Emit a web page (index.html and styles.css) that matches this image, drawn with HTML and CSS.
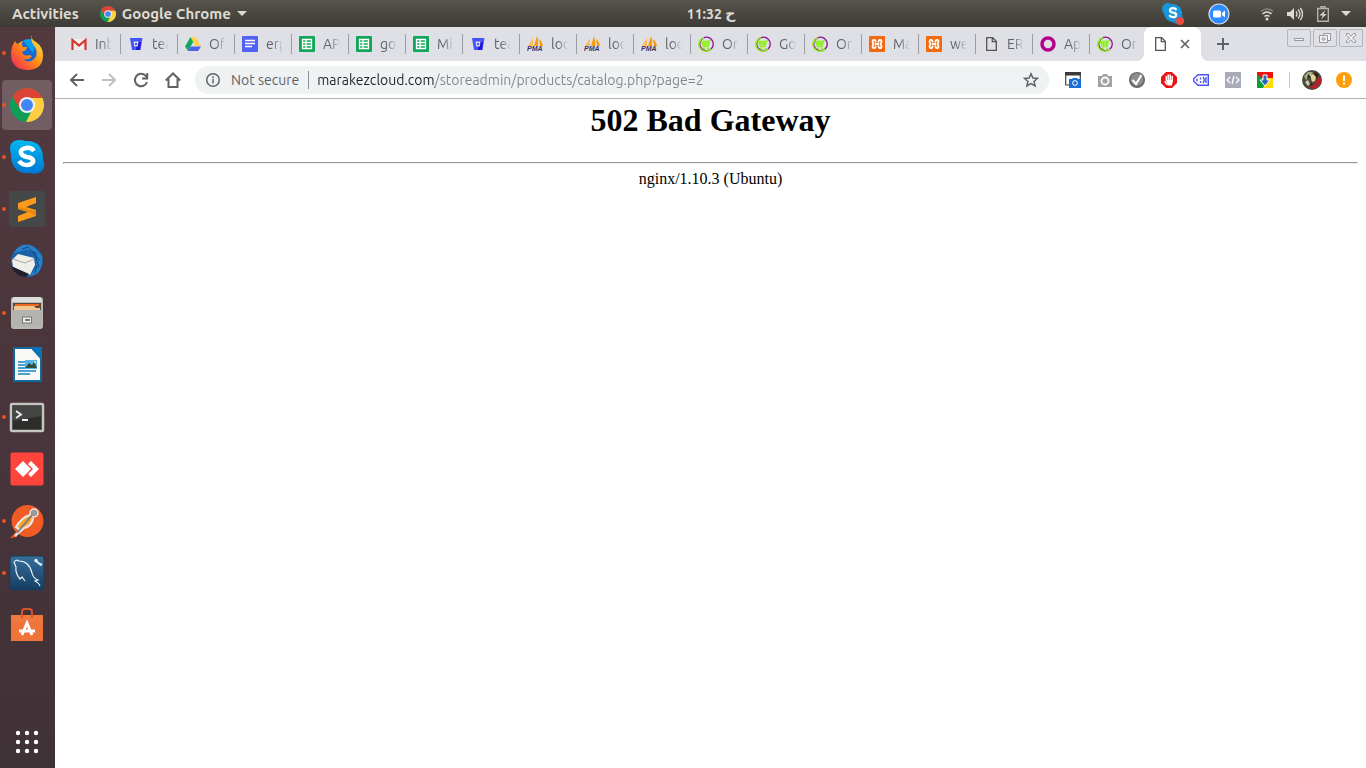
FILE: index.html
```
<!DOCTYPE html>
<html lang="en">
<head>
<meta charset="utf-8">
<title>502 Bad Gateway</title>
<link rel="stylesheet" href="styles.css">
</head>
<body>

<!-- icons used more than once -->
<svg class="sprite" aria-hidden="true">
<symbol id="chrome" viewBox="0 0 34 34">
<circle cx="17" cy="17" r="17" fill="#109d58"/>
<path d="M17 17L2.300 8.500A17 17 0 0 1 31.700 8.500L33 11H17z" fill="#db4437"/>
<path d="M17 10h15.500A17 17 0 0 1 16 34l7-14z" fill="#ffcd40"/>
<path d="M2.300 8.500L10 21l7-11z" fill="#db4437"/>
<circle cx="17" cy="17" r="8" fill="#f1f1f1"/><circle cx="17" cy="17" r="6" fill="#4285f4"/>
</symbol>
<symbol id="bucket" viewBox="0 0 16 16">
<path d="M2 2h12.500l-2 12H4z" fill="#4353ff"/><path d="M8 6h5l-1 8H8z" fill="#2418d8"/><path d="M5.500 5.500h5l-.8 5H6.300z" fill="#dedfe6"/><path d="M7 7h2v2H7z" fill="#4353ff"/>
</symbol>
<symbol id="sheet" viewBox="0 0 16 16">
<rect width="16" height="16" rx="1" fill="#0fa75a"/><path d="M3.500 3.500h9v9h-9zM3.500 6.500h9M3.500 9.500h9M7 3.500v9" fill="none" stroke="#fff" stroke-width="1.300"/>
</symbol>
<symbol id="pma" viewBox="0 0 16 16">
<path d="M6 2L1 10h5z" fill="#fdba5a"/><path d="M10 0L7 10h4q1-5-1-10z" fill="#f89c0e"/><path d="M12 3l1 7h3q-1-5-4-7z" fill="#f89c0e"/>
<text x="0" y="15" font-family="Liberation Sans" font-size="7" font-weight="bold" font-style="italic" fill="#3b3264">PMA</text>
</symbol>
<symbol id="cart" viewBox="0 0 16 16">
<circle cx="8.500" cy="8" r="6.800" fill="none" stroke="#8b1391" stroke-width="1.300"/><path d="M13 13A7 7 0 1 1 6 1.500" fill="none" stroke="#8ff01d" stroke-width="1.500"/>
<path d="M13 4.500l-1.500.5-1.500 5.500H5.500L3 5.500h9M4.500 7.500h7M6 5.500l1 5M9 5.500v5" fill="none" stroke="#8ff01d" stroke-width="1.300"/><circle cx="6" cy="12.500" r="1" fill="#8ff01d"/><circle cx="10" cy="12.500" r="1" fill="#8ff01d"/>
</symbol>
<symbol id="xampp" viewBox="0 0 16 16">
<rect width="16" height="16" rx="1" fill="#f4690c"/><path d="M6.500 6.500V5.300A1.500 1.500 0 0 0 3.500 5.300Q3.500 6.500 4.500 8 3.500 9.500 3.500 10.700A1.500 1.500 0 0 0 6.500 10.700V9.500M9.500 6.500V5.300A1.500 1.500 0 0 1 12.500 5.300Q12.500 6.500 11.500 8 12.500 9.500 12.500 10.700A1.500 1.500 0 0 1 9.500 10.700V9.500M6 8h4" fill="none" stroke="#fff" stroke-width="1.800"/>
</symbol>
<symbol id="page" viewBox="0 0 16 16">
<path d="M3.700 1.700h6l3.600 3.600v9H3.700zM9.300 1.700v4h4" fill="none" stroke="#555" stroke-width="1.300"/>
</symbol>
</svg>

<header class="topbar">
<div class="topbar-left">
<button class="activities">Activities</button>
<button class="appmenu"><svg width="16" height="16"><use href="#chrome"/></svg>Google Chrome<i class="caret"></i></button>
</div>
<time class="clock">11:32 ح</time>
<div class="topbar-right">
<svg width="22" height="22" viewBox="0 0 22 22"><circle cx="6" cy="6" r="6" fill="#1497dc"/><circle cx="15" cy="15" r="6" fill="#0b83cf"/><circle cx="11" cy="10" r="9" fill="#1497dc"/><path d="M14.500 7q-1.500-2.200-4-1.800-2.800.3-2.500 2.300.2 1.700 3.200 2.200 3.300.5 3 2.600-.4 1.900-3 1.900-2.500 0-3.900-2.100" fill="none" stroke="#fff" stroke-width="2.300"/><circle cx="18" cy="18" r="4" fill="#f04a3e"/></svg>
<svg class="zoom" width="22" height="22" viewBox="0 0 22 22"><circle cx="11" cy="11" r="10" fill="#2d8cff" stroke="#d9dde2" stroke-width="1.200"/><rect x="5" y="7.500" width="8" height="7" rx="1.500" fill="#fff"/><path d="M14 10l3-2.500v7L14 12z" fill="#fff"/></svg>
<svg class="wifi" width="14" height="14" viewBox="0 0 14 14"><g fill="none" stroke="#86837b" stroke-width="1.600"><path d="M1 4.500q6-5 12 0"/><path d="M2.500 7q4.500-4 9 0" stroke="#dfdbd2"/><path d="M4.500 9.500q2.500-2 5 0" stroke="#dfdbd2"/></g><circle cx="7" cy="12" r="1.500" fill="#dfdbd2"/></svg>
<svg class="sound" width="16" height="14" viewBox="0 0 16 14"><path d="M0 5h3l4-4v12L3 9H0z" fill="#dfdbd2"/><path d="M9 4.500q2 2.500 0 5M11 2.500q4 4.500 0 9M13.300 1q4.500 6 0 12" fill="none" stroke="#dfdbd2" stroke-width="1.300"/></svg>
<svg class="battery" width="12" height="16" viewBox="0 0 12 16"><path d="M4 2V.700h4V2M.700 2.500h10.600v12.800H.700z" fill="none" stroke="#b5b1a9" stroke-width="1.400"/><path d="M8.500 4L2.500 9.500H6L4 13.500 9.500 8H6.500z" fill="#dfdbd2"/></svg>
<i class="caret"></i>
</div>
</header>

<div class="desktop">
<nav class="dock">
<button class="app running" title="Firefox"><svg viewBox="0 0 34 34"><defs><linearGradient id="ff" x1="1" y1="0" x2="0" y2="1"><stop offset="0" stop-color="#fff44f"/><stop offset=".5" stop-color="#ff8a16"/><stop offset="1" stop-color="#ef1d63"/></linearGradient></defs><circle cx="17" cy="17" r="13" fill="#1769d2"/><path d="M13 5q7-5 13 3l-3 9z" fill="#0a9ced"/><path d="M21 0q1 4 5 6 7 5 7 13 0 15-16 15Q1 33 1 18q0-7 4-13 1 3 3 3 3-3 5-3-2 3 0 6h4l-1 3-4 2q2 5 7 3l3 1q-4 5-9 3 5 5 11 0 6-6-1-15-3-5-1-8z" fill="url(#ff)"/></svg></button>
<button class="app running current" title="Google Chrome"><svg><use href="#chrome"/></svg></button>
<button class="app running" title="Skype"><svg viewBox="0 0 34 34"><defs><linearGradient id="sk" x1="0" y1="0" x2="0" y2="1"><stop offset="0" stop-color="#00b7f0"/><stop offset="1" stop-color="#0078d4"/></linearGradient></defs><path d="M9 0q4 0 6 1 17-1 18 16v3q3 6-1 11-5 4-11 2Q3 35 1 17v-3Q-3 1 9 0z" fill="url(#sk)"/><path d="M24 11q-3-4-8-3-6 1-5 5 1 3 6 4 7 1 6 5-2 3-6 3-5 0-8-4" fill="none" stroke="#fff" stroke-width="4.500"/></svg></button>
<button class="app running" title="Sublime Text"><svg viewBox="0 0 34 34"><rect x="-1" y="-1" width="36" height="36" rx="2" fill="#464847"/><path d="M8 11l18-6v6l-10 4 10 3v6L8 30v-6l10-4-10-3z" fill="#ff9b1b"/><path d="M8 17v-2l18 4v5l-8-4z" fill="#e9870f"/></svg></button>
<button class="app" title="Thunderbird"><svg viewBox="0 0 34 34"><circle cx="17" cy="17" r="16" fill="#1c62ab"/><path d="M3 9Q13-4 24 3l8 9q1 10-4 17-4 3-8 3l6-8 1-12q-5-7-12-6z" fill="#2681cb"/><path d="M2 16l6-6 16 4 1 7-5 10-17-8z" fill="#f0eee8"/><path d="M3 15l12 4 9-4" fill="none" stroke="#a9aaaa"/><path d="M1 22l18 8-3 3Q6 33 1 22z" fill="#211f2c"/><path d="M12 5l7-2M19 5l8 5M23 8l7 9M26 14l3 9M27 21l-2 8" stroke="#164678"/></svg></button>
<button class="app running" title="Files"><svg viewBox="0 0 34 34"><rect x="1" y="1" width="32" height="32" rx="3" fill="#b9b8b5"/><path d="M2 5q0-4 4-4h22q4 0 4 4v1H2z" fill="#ddd"/><path d="M3 7h28v7H3z" fill="#55483f"/><path d="M5 8h24v2H5z" fill="#e86a1c"/><path d="M4 10h20l2 2h4v3H4z" fill="#f3c792"/><path d="M2 14h30v17H2z" fill="#b4b3b0"/><rect x="12.500" y="21" width="9" height="6" fill="#eee" stroke="#777"/><path d="M15 24h5" stroke="#777" stroke-width="2"/></svg></button>
<button class="app" title="LibreOffice Writer"><svg viewBox="0 0 34 34"><path d="M4 0h18l9 10v23H4z" fill="#f8f8f6" stroke="#13689e" stroke-width="2"/><path d="M20-1h12v13z" fill="#0a73b6"/><path d="M8 14h7M8 17h7M8 20h7M8 23h18M8 26h12" stroke="#4ba0cf" stroke-width="2"/><path d="M15 12h12v9H15z" fill="#51b5eb"/><path d="M15 20l4-5 3 2 2-3 3 6z" fill="#314e3b"/><circle cx="25" cy="14" r="1" fill="#fce94f"/></svg></button>
<button class="app running" title="Terminal"><svg viewBox="0 0 34 34"><rect x="1" y="4" width="32" height="27" rx="1" fill="#2d2e2c" stroke="#c6c5c1" stroke-width="2.500"/><path d="M3 6h28v10L3 21z" fill="#454643"/><path d="M6 11l5 3.500L6 18M12 20h6" fill="none" stroke="#eee" stroke-width="1.800"/></svg></button>
<button class="app" title="AnyDesk"><svg viewBox="0 0 34 34"><rect x="0.500" y="0.500" width="33" height="33" rx="2" fill="#ff443b"/><path d="M13 9l8 8-8 8-8-8zM18 12l3-3 8 8-8 8-3-3 5-5z" fill="#fff"/></svg></button>
<button class="app running" title="Postman"><svg viewBox="0 0 34 34"><circle cx="17.500" cy="17" r="16" fill="#f35b25"/><path d="M0 34l7-7v6z" fill="#f35b25"/><circle cx="24" cy="9" r="4" fill="#999" stroke="#e6e6e6" stroke-width="1.500"/><path d="M20 11q-8 2-14 12l4 3-5 6 9-8q8-2 9-10" fill="#f7a133" stroke="#e6e6e6" stroke-width="2.300"/><path d="M22 11L7 29" stroke="#777" stroke-width="1.500"/></svg></button>
<button class="app running" title="MySQL Workbench"><svg viewBox="0 0 34 34"><defs><linearGradient id="my" x1="0" y1="0" x2="0" y2="1"><stop offset="0" stop-color="#35709a"/><stop offset="1" stop-color="#153c62"/></linearGradient></defs><rect width="34" height="34" rx="3" fill="url(#my)" stroke="#1b3c58"/><path d="M15 25l-3-4-2 2Q5 17 6 11L4 6q2-3 5-1 10 0 13 12 1 5 6 7l-3 1q4 2 5 5" fill="none" stroke="#e7f3fa" stroke-width="1.200"/><path d="M26 5l5 4" stroke="#eef" stroke-width="2"/><circle cx="26" cy="4.500" r="1.700" fill="#eef"/><circle cx="31" cy="8.500" r="1.200" fill="#eef"/></svg></button>
<button class="app" title="Ubuntu Software"><svg viewBox="0 0 34 34"><path d="M1 7h32v26H1z" fill="#ee7439"/><path d="M1 7h32v7H1z" fill="#f0793f"/><path d="M12 10V4q0-3 3-3h4q3 0 3 3v6" fill="none" stroke="#d9532a" stroke-width="2"/><path d="M12 27l5-12 5 12M9 23h16" fill="none" stroke="#fff" stroke-width="2.800"/></svg></button>
<button class="app grid-app" title="Show Applications"><svg viewBox="0 0 34 34" fill="#fff"><g id="dots"><circle cx="8" cy="8" r="2.200"/><circle cx="17" cy="8" r="2.200"/><circle cx="26" cy="8" r="2.200"/></g><use href="#dots" y="9"/><use href="#dots" y="18"/></svg></button>
</nav>

<main class="window">
<div class="tabstrip">
<button class="tab"><svg viewBox="0 0 16 16"><path d="M1 3h14v11H1z" fill="#eee"/><path d="M1.500 14V4L8 9.500 14.500 4v10" fill="none" stroke="#d8332a" stroke-width="2.200"/></svg><span>Inb</span></button>
<button class="tab"><svg><use href="#bucket"/></svg><span>tea</span></button>
<button class="tab"><svg viewBox="0 0 16 16"><path d="M5.500 1L0 10.500 3 15l5.500-9.500z" fill="#11a861"/><path d="M5.500 1h5L16 10h-5.500z" fill="#ffd04b"/><path d="M5.500 10.500H16L13 15H3z" fill="#4f63e8"/></svg><span>Of</span></button>
<button class="tab"><svg viewBox="0 0 16 16"><rect width="16" height="16" rx="1" fill="#5360f5"/><path d="M3 4.500h10M3 7.500h10M3 10.500h7" stroke="#fff" stroke-width="1.300"/></svg><span>erp</span></button>
<button class="tab"><svg><use href="#sheet"/></svg><span>AP</span></button>
<button class="tab"><svg><use href="#sheet"/></svg><span>go</span></button>
<button class="tab"><svg><use href="#sheet"/></svg><span>Mi</span></button>
<button class="tab"><svg><use href="#bucket"/></svg><span>tea</span></button>
<button class="tab"><svg><use href="#pma"/></svg><span>loc</span></button>
<button class="tab"><svg><use href="#pma"/></svg><span>loc</span></button>
<button class="tab"><svg><use href="#pma"/></svg><span>loc</span></button>
<button class="tab"><svg><use href="#cart"/></svg><span>Or</span></button>
<button class="tab"><svg><use href="#cart"/></svg><span>Go</span></button>
<button class="tab"><svg><use href="#cart"/></svg><span>Or</span></button>
<button class="tab"><svg><use href="#xampp"/></svg><span>Ma</span></button>
<button class="tab"><svg><use href="#xampp"/></svg><span>we</span></button>
<button class="tab"><svg><use href="#page"/></svg><span>ER</span></button>
<button class="tab"><svg viewBox="0 0 16 16"><circle cx="8" cy="8" r="6" fill="none" stroke="#b5008b" stroke-width="3.500"/></svg><span>Ap</span></button>
<button class="tab last"><svg><use href="#cart"/></svg><span>Or</span></button>
<div class="tab active"><svg><use href="#page"/></svg><button class="close" title="Close tab"><svg viewBox="0 0 16 16"><path d="M4 4l8 8M12 4l-8 8" stroke="#5f6368" stroke-width="1.700"/></svg></button></div>
<button class="newtab" title="New tab"><svg viewBox="0 0 16 16"><path d="M8 2v12M2 8h12" stroke="#5f6368" stroke-width="2"/></svg></button>
<div class="controls">
<button title="Minimize"><svg viewBox="0 0 14 14"><path d="M2.500 7.500h9v2h-9z"/></svg></button>
<button title="Restore"><svg viewBox="0 0 14 14"><path d="M5.500 4V2.500h7v7H10M1.500 4.500h8v7h-8zM4 7h3v2H4z"/></svg></button>
<button title="Close"><svg viewBox="0 0 14 14"><path d="M2.500 2.500h2L7 5.300l2.500-2.800h2v1.500L8.500 7l3 3v1.500h-2L7 8.700l-2.500 2.800h-2V10l3-3-3-3z"/></svg></button>
</div>
</div>

<div class="toolbar">
<button class="nav" title="Back"><svg viewBox="0 0 16 16"><path d="M15 8H2.500M8 2L2 8l6 6"/></svg></button>
<button class="nav off" title="Forward" disabled><svg viewBox="0 0 16 16"><path d="M1 8h12.500M8 2l6 6-6 6"/></svg></button>
<button class="nav" title="Reload"><svg viewBox="0 0 16 16"><path d="M14 10A6.200 6.200 0 1 1 12.500 3.600L14 5.500M14.200 1v5.500H9"/></svg></button>
<button class="nav" title="Home"><svg viewBox="0 0 16 16"><path d="M.800 8.500L8 1.500l7.200 7M3.500 7v8h9V7"/></svg></button>
<div class="omnibox">
<svg width="16" height="16" viewBox="0 0 16 16" fill="none" stroke="#5f6368" stroke-width="1.500"><circle cx="8" cy="8" r="6.300"/><path d="M8 7v4.500M8 4.300v1.600"/></svg>
<label for="url">Not secure</label>
<input id="url" type="text" value="marakezcloud.com/storeadmin/products/catalog.php?page=2">
<button class="star" title="Bookmark this page"><svg viewBox="0 0 16 16"><path d="M8 1.800l1.900 4.200 4.600.4-3.500 3 1.100 4.500L8 11.500l-4.100 2.400L5 9.400l-3.500-3 4.600-.4z" fill="none" stroke="#5f6368" stroke-width="1.500"/></svg></button>
</div>
<div class="extensions">
<button title="Window capture"><svg viewBox="0 0 16 16"><path d="M.700 1h14.600v12H.700z" fill="#fff" stroke="#444" stroke-width="1.200"/><path d="M0 0h16v3.500H0z" fill="#3b3b3b"/><path d="M4 7h3l1-1h4l1 1h3v9H4z" fill="#1a6fd6"/><circle cx="10" cy="11" r="2.400" fill="none" stroke="#fff"/></svg></button>
<button title="Screenshot"><svg viewBox="0 0 16 16"><path d="M1 4h4l1-2h4l1 2h4v11H1z" fill="#a2a2a2"/><circle cx="8" cy="9" r="3.500" fill="#a2a2a2" stroke="#fff" stroke-width="1.800"/></svg></button>
<button title="Checker"><svg viewBox="0 0 16 16"><circle cx="8" cy="8" r="8" fill="#666"/><circle cx="8" cy="7.500" r="6.500" fill="#8c8c8c"/><path d="M3.500 8L7 12l5.500-9" fill="none" stroke="#fff" stroke-width="2"/></svg></button>
<button title="Ad blocker"><svg viewBox="0 0 16 16"><path d="M5 0h6l5 5v6l-5 5H5l-5-5V5z" fill="#ee1111"/><path d="M5.300 8V4.500M7.200 8V3M9.200 8V3M11.200 9V4.500M4 9.500l2 3" stroke="#fff" stroke-width="1.500" stroke-linecap="round"/><path d="M4.800 8H12l-1 5.500H7z" fill="#fff"/></svg></button>
<button title="Tags"><svg viewBox="0 0 16 16"><path d="M5 2.700h10.300v10.600H5L.800 9.500v-3z" fill="#fff" stroke="#4a54ef" stroke-width="1.400"/><path d="M4 6.500v3M7.500 5.500v2M7.500 9v2M10 5q2.500 3 0 6M13 5v6" fill="none" stroke="#4a54ef" stroke-width="1.400"/></svg></button>
<button title="Source"><svg viewBox="0 0 16 16"><path d="M0 0h16v16H0z" fill="#a9abba"/><path d="M5 5L2 8l3 3M11 5l3 3-3 3M9 4l-2 8" fill="none" stroke="#fff" stroke-width="1.300"/></svg></button>
<button title="Downloads"><svg viewBox="0 0 16 16"><path d="M0 0h16v6H0z" fill="#e11"/><path d="M0 2l8 7-1 7H0z" fill="#0a9d3c"/><path d="M16 6v10H6l4-10z" fill="#fd0"/><path d="M6 3h4v5h3l-5 6-5-6h3z" fill="#2f66b8" stroke="#fff"/></svg></button>
</div>
<i class="divider"></i>
<button class="profile" title="Profile"><svg viewBox="0 0 20 20"><circle cx="10" cy="10" r="10" fill="#4c4936"/><path d="M2 6l4-4 5 0-3 5-4 3z" fill="#a1ad88"/><path d="M8 5l3-1 3 3-1 4-3 1z" fill="#dfd096"/><path d="M12 2l4 2-1 5z" fill="#271613"/><path d="M14 10l5-3v6l-5 5-5 1-1-3 4-1z" fill="#b71f2c"/><path d="M3 12l3-2 2 4-2 2z" fill="#c9ccb8"/><path d="M6 4l3 3-4 2zM9 12l2 3-3 1z" fill="#2c2a1e"/></svg></button>
<button class="menu" title="Update available"><svg viewBox="0 0 16 16"><circle cx="8" cy="8" r="8" fill="#ff9d0a"/><path d="M8 3.500v5.500M8 10.500v2" stroke="#fff" stroke-width="2"/></svg></button>
</div>

<article class="page">
<h1>502 Bad Gateway</h1>
<hr>
<p>nginx/1.10.3 (Ubuntu)</p>
</article>
</main>
</div>

</body>
</html>
```
FILE: styles.css
```
* {box-sizing: border-box;}
body {margin: 0; min-height: 100vh; display: flex; flex-direction: column; font-family: Ubuntu, "Noto Sans", "DejaVu Sans", sans-serif; font-size: 14px; background: #fff;}
button {border: 0; padding: 0; background: none; font: inherit; color: inherit;}
svg {display: block; flex: none;}
.sprite {position: absolute; width: 0; height: 0;}

/* top panel */
.topbar {display: grid; grid-template-columns: 1fr auto 1fr; align-items: center; height: 27px; color: #dfdbd2; font-weight: bold; background: linear-gradient(#57544c, #3d3b36);}
.topbar-left, .topbar-right, .appmenu {display: flex; align-items: center;}
.topbar-left {padding-left: 12px; gap: 21px; font-size: 15px;}
.appmenu {gap: 6px;}
.clock {padding-left: 56px;}
.topbar-right {justify-content: flex-end; padding-right: 15px;}
.zoom {margin: 0 30px 0 24px;}
.sound {margin: 0 14px 0 13px;}
.battery {margin-right: 12px;}
.caret {border: 5px solid transparent; border-top-color: #dfdbd2; border-bottom: 0;}

.desktop {display: flex; flex: 1;}

/* dock */
.dock {display: flex; flex-direction: column; gap: 2px; width: 55px; padding: 1px 3px 1px 2px; background: linear-gradient(#523a3f, #48343b 60%, #3f3236);}
.app {position: relative; display: flex; align-items: center; justify-content: center; height: 50px; border-radius: 4px;}
.app svg {width: 34px; height: 34px; overflow: visible;}
.current {background: #725d62;}
.running::before {content: ""; position: absolute; left: 0; top: 23px; width: 4px; height: 4px; border-radius: 50%; background: #e95420;}
.grid-app {margin-top: auto;}

/* browser window */
.window {flex: 1; min-width: 0;}
.tabstrip {display: flex; height: 34px; padding-left: 8px; background: #dee0e6;}
.tab {position: relative; display: flex; align-items: center; gap: 8px; width: 57px; padding: 0 8px; color: #5f6368; text-align: left;}
.tab svg {width: 16px; height: 16px;}
.tab span {width: 18px; overflow: hidden; white-space: nowrap; -webkit-mask-image: linear-gradient(90deg, #000 40%, transparent); mask-image: linear-gradient(90deg, #000 40%, transparent);}
.tab::after {content: ""; position: absolute; right: -1px; top: 7px; width: 1px; height: 20px; background: #9a9da3;}
.last::after {display: none;}
.active {margin-left: -2px; gap: 9px; background: #fff; border-radius: 8px 8px 0 0;}
.active::before, .active::after {content: ""; position: absolute; top: auto; bottom: 0; width: 8px; height: 8px;}
.active::before {left: -8px; background: radial-gradient(circle at 0 0, transparent 8px, #fff 8px);}
.active::after {right: -8px; background: radial-gradient(circle at 100% 0, transparent 8px, #fff 8px);}
.newtab {margin-left: 14px;}
.newtab svg {width: 16px; height: 16px;}
.controls {display: flex; gap: 2px; margin-left: auto; padding: 2px 3px 0 0;}
.controls button {display: flex; align-items: center; justify-content: center; width: 24px; height: 18px; border: 1px solid #b4b6bb; border-radius: 2px;}
.controls svg {width: 14px; height: 14px; fill: #f7f7f9; stroke: #94969b;}

.toolbar {display: flex; align-items: center; height: 38px; padding: 0 14px; border-bottom: 1px solid #b0b0b0; background: #fff;}
.nav {margin-right: 16px;}
.nav svg {width: 16px; height: 16px; fill: none; stroke: #5f6368; stroke-width: 2;}
.off svg {stroke: #bdbfc1;}
.omnibox {display: flex; align-items: center; flex: 1; height: 28px; margin: 0 16px 0 -2px; padding: 0 10px; border-radius: 14px; background: #eef2f3;}
.omnibox label {margin: 0 9px 0 10px; color: #5f6368;}
/* domain part is darker than the path */
.omnibox input {flex: 1; min-width: 0; height: 18px; border: 0; border-left: 1px solid #8b8e92; padding: 0 0 0 8px; outline: 0; font: inherit; color: transparent; background: linear-gradient(90deg, #202124 126px, #80858a 126px); -webkit-background-clip: text, border-box; background-clip: text;}
.star svg {width: 16px; height: 16px;}
.extensions {display: flex; gap: 16px;}
.extensions svg, .menu svg {width: 16px; height: 16px;}
.divider {width: 1px; height: 16px; margin: 0 12px 0 16px; background: #c4c6ca;}
.profile svg {width: 20px; height: 20px;}
.menu {margin-left: 14px;}

/* page content */
.page {padding: 3px 8px 8px; font-family: "Liberation Serif", serif; font-size: 16px; text-align: center; color: #000;}
.page h1 {margin: 0 0 23px; font-size: 32px;}
.page hr {margin: 0 0 6px;}
.page p {margin: 0;}
```
